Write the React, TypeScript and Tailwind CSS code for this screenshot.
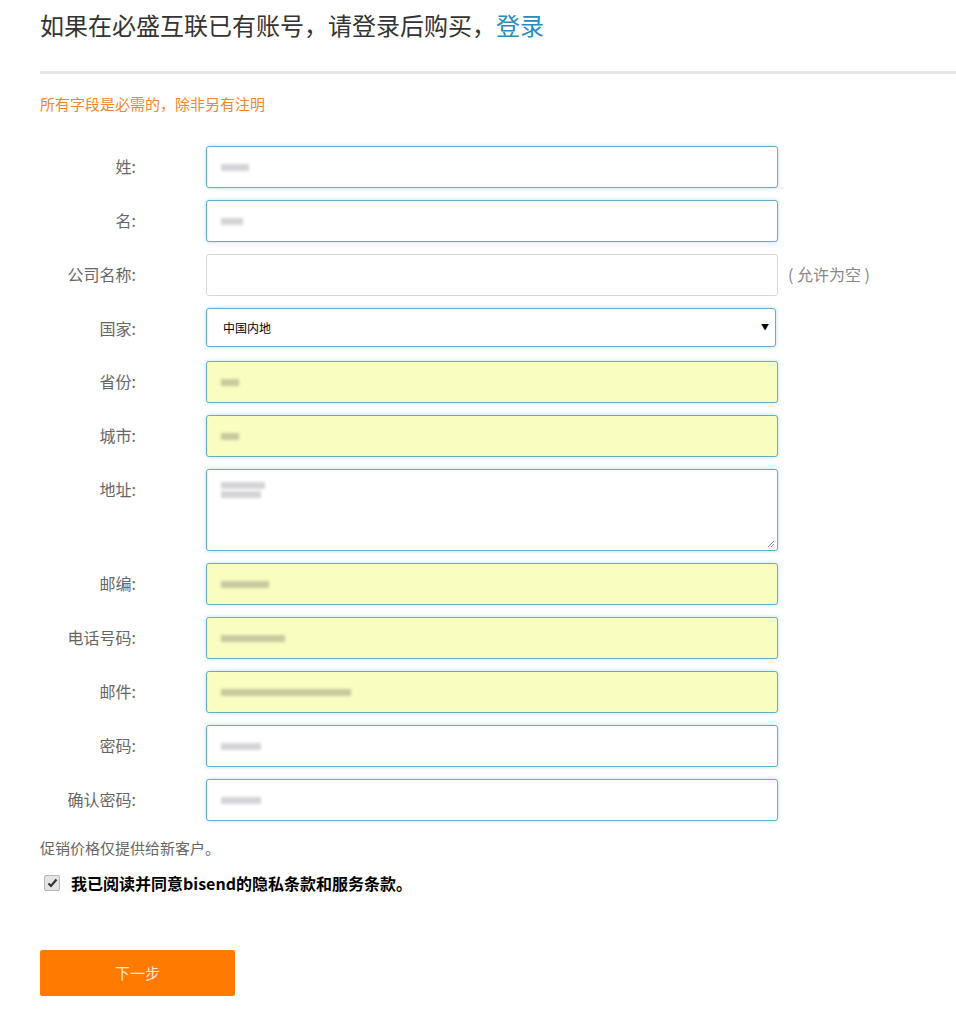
import React from "react";

const font = { fontFamily: '"Noto Sans CJK SC", "Noto Sans", sans-serif' };

type Field = {
  label: string;
  kind?: "input" | "textarea" | "select";
  filled?: boolean;
  plain?: boolean;
  blob?: number;
  note?: string;
};

const fields: Field[] = [
  { label: "姓:", blob: 28 },
  { label: "名:", blob: 22 },
  { label: "公司名称:", plain: true, note: "( 允许为空 )" },
  { label: "国家:", kind: "select" },
  { label: "省份:", filled: true, blob: 18 },
  { label: "城市:", filled: true, blob: 18 },
  { label: "地址:", kind: "textarea", blob: 44 },
  { label: "邮编:", filled: true, blob: 48 },
  { label: "电话号码:", filled: true, blob: 64 },
  { label: "邮件:", filled: true, blob: 130 },
  { label: "密码:", blob: 40 },
  { label: "确认密码:", blob: 40 },
];

function Blob({ w, filled, tall }: { w: number; filled?: boolean; tall?: boolean }) {
  // blurred placeholder for the hidden values in the screenshot
  return (
    <div className={`flex flex-col gap-[2px] ${tall ? "mt-[6px]" : ""}`}>
      <div
        className={`h-[7px] blur-[1.5px] ${filled ? "bg-[#c9c8a0]" : "bg-[#d4d4d8]"}`}
        style={{ width: w }}
      />
      {tall && <div className="h-[7px] w-[40px] bg-[#d4d4d8] blur-[1.5px]" />}
    </div>
  );
}

function Control({ f }: { f: Field }) {
  if (f.kind === "select") {
    return (
      <div className="relative flex h-[39px] w-[570px] items-center rounded-[3px] border border-[#5db0cf] bg-white pl-[16px] shadow-[0_0_4px_rgba(93,176,207,0.4)]">
        <span className="text-[12px] text-black">中国内地</span>
        <span className="absolute right-[6px] top-[13px] text-[8px] leading-[10px] text-black">▼</span>
      </div>
    );
  }
  if (f.kind === "textarea") {
    return (
      <div className="relative h-[82px] w-[572px] rounded-[3px] border border-[#5db0cf] bg-white px-[14px] py-[6px] shadow-[0_0_4px_rgba(93,176,207,0.4)]">
        <Blob w={f.blob ?? 40} tall />
        <svg className="absolute bottom-[2px] right-[2px]" width="8" height="8" viewBox="0 0 8 8">
          <path d="M7 1 L1 7 M7 4 L4 7" stroke="#888" strokeWidth="1" />
        </svg>
      </div>
    );
  }
  const border = f.plain
    ? "border-[#d6d6d6]"
    : "border-[#5db0cf] shadow-[0_0_4px_rgba(93,176,207,0.4)]";
  const bg = f.filled ? "bg-[#fafdc0]" : "bg-white";
  return (
    <div className={`flex h-[42px] w-[572px] items-center rounded-[3px] border px-[14px] ${border} ${bg}`}>
      {f.blob ? <Blob w={f.blob} filled={f.filled} /> : null}
    </div>
  );
}

export default function App() {
  return (
    <div className="min-h-screen bg-white pl-[40px] text-[#333]" style={font}>
      <h1 className="pt-[7px] text-[24px] leading-[36px] font-normal text-[#333]">
        如果在必盛互联已有账号，请登录后购买，<a className="text-[#2a8cbd]">登录</a>
      </h1>
      <div className="mt-[28px] h-[3px] bg-[#e6e6e6]" />
      <p className="mt-[20px] text-[15px] leading-[20px] text-[#f5862e]">所有字段是必需的，除非另有注明</p>

      <div className="mt-[32px] flex flex-col gap-[12px]">
        {fields.map((f) => (
          <div key={f.label} className="flex items-start">
            <label className="w-[96px] text-right text-[16px] leading-[41px] text-[#666]">{f.label}</label>
            <div className="ml-[70px]">
              <Control f={f} />
            </div>
            {f.note && (
              <span className="ml-[10px] whitespace-pre text-[16px] leading-[41px] text-[#888]">{f.note}</span>
            )}
          </div>
        ))}
      </div>

      <p className="mt-[16px] text-[15px] leading-[22px] text-[#666]">促销价格仅提供给新客户。</p>
      <div className="mt-[12px] flex items-center">
        <div className="ml-[4px] flex h-[16px] w-[16px] items-center justify-center rounded-[2px] border border-[#b8b8b8] bg-[#e4e4e4]">
          <svg width="11" height="10" viewBox="0 0 11 10">
            <path d="M1.5 5.5 L4 8 L9.5 1.5" fill="none" stroke="#333" strokeWidth="2.2" />
          </svg>
        </div>
        <span className="ml-[11px] text-[16px] font-bold text-black">我已阅读并同意bisend的隐私条款和服务条款。</span>
      </div>

      <button className="mt-[55px] mb-[28px] flex h-[46px] w-[195px] items-center justify-center rounded-[2px] bg-[#ff7a00] text-[15px] text-[#ffe5cc]">
        下一步
      </button>
    </div>
  );
}
